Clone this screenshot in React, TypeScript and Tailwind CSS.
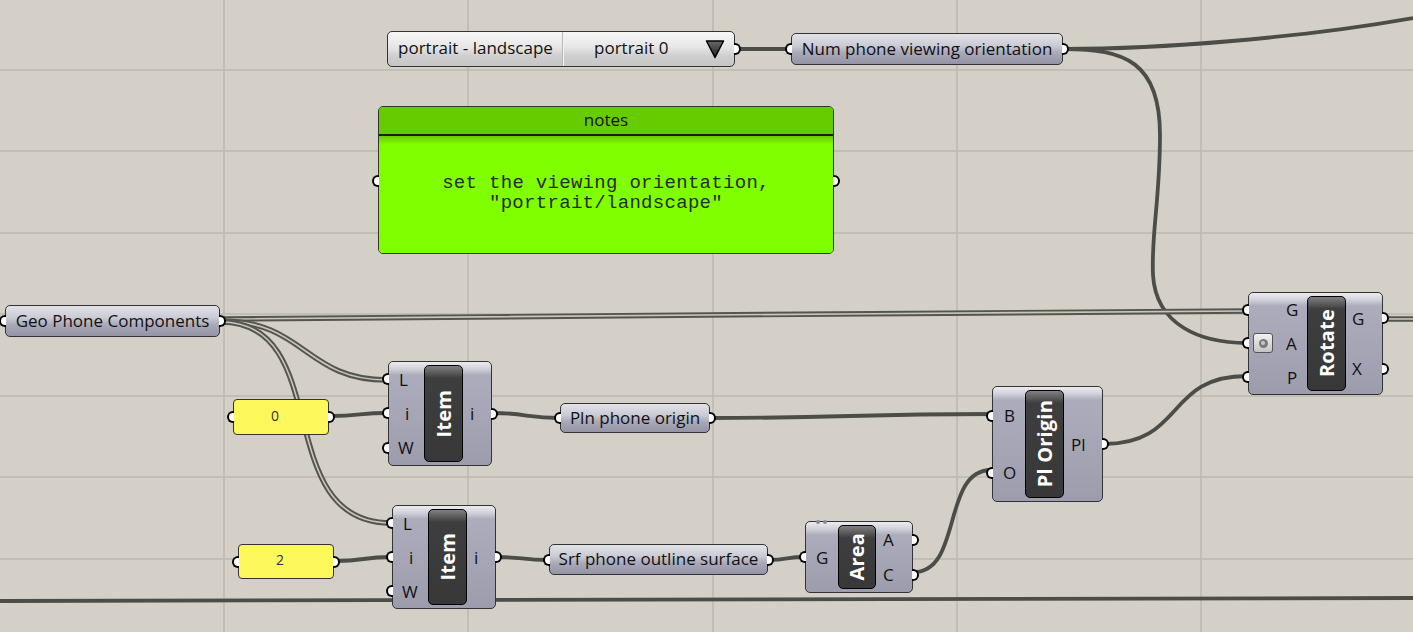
import React from "react";

function Port({ side }: { side: "l" | "r" }) {
  return side === "l" ? (
    <span className="absolute left-[-7px] top-1/2 -translate-y-1/2 w-[7px] h-[12px] rounded-l-full border-[2.5px] border-r-0 border-black bg-white" />
  ) : (
    <span className="absolute right-[-7px] top-1/2 -translate-y-1/2 w-[7px] h-[12px] rounded-r-full border-[2.5px] border-l-0 border-black bg-white" />
  );
}

const paramBg =
  "bg-[linear-gradient(to_bottom,#e2e2e8,#cacad4_40%,#a9a9b9_62%,#9494a6)]";
const compBg =
  "bg-[linear-gradient(to_bottom,#ececf0,#d0d0da_7px,#acacbc_13px,#a4a4b4_60%,#9c9cac)]";
const font = "font-['Open_Sans','Noto_Sans',sans-serif]";

function Param({ cls, label }: { cls: string; label: string }) {
  return (
    <div
      className={
        "absolute rounded-[5px] border border-[#333] flex items-center justify-center text-[17px] text-[#111] " +
        paramBg +
        " " +
        cls
      }
    >
      <Port side="l" />
      <span className="leading-none pb-[2px]">{label}</span>
      <Port side="r" />
    </div>
  );
}

function Yellow({ cls, label }: { cls: string; label: string }) {
  return (
    <div
      className={
        "absolute rounded-[4px] border border-[#333] bg-[#fdf85c] flex justify-center items-center pb-[4px] pr-[12px] text-[14px] text-[#333] " +
        cls
      }
    >
      <Port side="l" />
      {label}
      <Port side="r" />
    </div>
  );
}

function Row({
  label,
  side,
  cls = "",
}: {
  label: string;
  side: "l" | "r";
  cls?: string;
}) {
  return (
    <div className={"relative h-[20px] flex items-center " + cls}>
      <Port side={side} />
      <span className="text-[17px] leading-none text-[#111]">{label}</span>
    </div>
  );
}

function Inner({ name, cls }: { name: string; cls: string }) {
  return (
    <div
      className={
        "my-[3px] rounded-[5px] border-[1.5px] border-black bg-[linear-gradient(to_bottom,#808080,#5a5a5a_7px,#3e3e3e_12px,#383838)] flex items-center justify-center " +
        cls
      }
    >
      <span className="[writing-mode:vertical-rl] rotate-180 text-white font-bold text-[20px] leading-none tracking-[0.2px]">
        {name}
      </span>
    </div>
  );
}

function Grid() {
  const xs = [224, 468, 713, 957, 1201];
  const ys = [70, 151, 233, 314, 396, 477, 559];
  return (
    <g stroke="#bcb8b0" strokeWidth="1.5">
      {xs.map((x) => (
        <line key={"x" + x} x1={x} y1={0} x2={x} y2={632} />
      ))}
      {ys.map((y) => (
        <line key={"y" + y} x1={0} y1={y} x2={1413} y2={y} />
      ))}
    </g>
  );
}

function Wire({ d }: { d: string }) {
  return <path d={d} fill="none" stroke="#4c4c48" strokeWidth="3.8" />;
}
function DWire({ d }: { d: string }) {
  return (
    <g fill="none">
      <path d={d} stroke="#55554f" strokeWidth="5.5" />
      <path d={d} stroke="#c9c5bd" strokeWidth="1.6" />
    </g>
  );
}

export default function App() {
  return (
    <div
      className={
        "relative w-[1413px] h-[632px] overflow-hidden bg-[#d4d0c8] " + font
      }
    >
      <svg
        className="absolute inset-0"
        width="1413"
        height="632"
        viewBox="0 0 1413 632"
      >
        <Grid />
        <Wire d="M0,601 C400,600 900,598 1413,598" />
        <Wire d="M736,49 L790,49" />
        <Wire d="M1064,49 C1160,49 1300,38 1413,18" />
        <Wire d="M1064,49 C1125,49 1160,62 1160,135 C1160,200 1151,235 1153,275 C1156,325 1200,343 1247,343" />
        <DWire d="M221,319 C600,318 900,312 1247,311" />
        <DWire d="M1384,319 L1413,319" />
        <DWire d="M221,321 C305,321 305,380 387,380" />
        <DWire d="M221,322 C335,322 270,523 391,523" />
        <Wire d="M331,416 C360,416 360,413 387,413" />
        <Wire d="M336,561 C365,561 362,557 391,557" />
        <Wire d="M493,413 C525,413 528,418 559,418" />
        <Wire d="M711,418 C850,418 850,414 991,414" />
        <Wire d="M497,557 C522,557 522,560 548,560" />
        <Wire d="M769,560 C787,560 787,557 804,557" />
        <Wire d="M914,572 C962,572 942,470 991,470" />
        <Wire d="M1104,444 C1185,444 1165,376 1247,376" />
      </svg>

      {/* Value list */}
      <div className="absolute left-[387px] top-[31px] w-[348px] h-[36px] rounded-[5px] border border-[#333] bg-[linear-gradient(to_bottom,#f7f7f7,#e6e6e6_45%,#cfcfcf_70%,#c6c6c6)] flex items-center text-[17px] text-[#111]">
        <div className="w-[175px] h-full flex items-center pl-[10px] border-r border-[#b8b8b8]">
          <span className="pb-[2px] whitespace-nowrap">portrait - landscape</span>
        </div>
        <div className="w-[1px] h-full bg-[#f4f4f4]" />
        <div className="flex-1 h-full flex items-center justify-between pl-[30px] pr-[9px]">
          <span className="pb-[2px]">portrait 0</span>
          <svg width="20" height="20" viewBox="0 0 20 20">
            <defs>
              <linearGradient id="tri" x1="0" y1="0" x2="0" y2="1">
                <stop offset="0" stopColor="#6a6a6a" />
                <stop offset="1" stopColor="#1e1e1e" />
              </linearGradient>
            </defs>
            <polygon
              points="1.5,2 18.5,2 10,18.5"
              fill="url(#tri)"
              stroke="#000"
              strokeWidth="1.5"
              strokeLinejoin="round"
            />
          </svg>
        </div>
        <Port side="r" />
      </div>

      <Param
        cls="left-[791px] top-[33px] w-[272px] h-[32px]"
        label="Num phone viewing orientation"
      />

      {/* Notes panel */}
      <div className="absolute left-[378px] top-[106px] w-[456px] h-[148px] rounded-[5px] border border-[#333] bg-[#80ff00] flex flex-col">
        <div className="h-[29px] rounded-t-[4px] bg-[#66cc00] border-b-[2px] border-[#1c1c1c] flex items-center justify-center text-[17px] text-[#111]">
          <span className="pb-[2px]">notes</span>
        </div>
        <div className="relative flex-1 rounded-b-[4px] bg-[linear-gradient(to_bottom,#66cc00,#80ff00_9px,#80ff00)] flex flex-col items-center justify-center pb-[2px] font-['Liberation_Mono',monospace] text-[19px] leading-[19.5px] text-[#2a2a2a]">
          <div className="tracking-[0.3px]">set the viewing orientation,</div>
          <div className="tracking-[0.3px]">"portrait/landscape"</div>
        </div>
        <span className="absolute left-[-7px] top-[68px] w-[7px] h-[12px] rounded-l-full border-[2.5px] border-r-0 border-black bg-white" />
        <span className="absolute right-[-7px] top-[68px] w-[7px] h-[12px] rounded-r-full border-[2.5px] border-l-0 border-black bg-white" />
      </div>

      <Param
        cls="left-[5px] top-[305px] w-[215px] h-[32px]"
        label="Geo Phone Components"
      />
      <Yellow cls="left-[233px] top-[399px] w-[96px] h-[36px]" label="0" />
      <Yellow cls="left-[238px] top-[544px] w-[96px] h-[35px]" label="2" />
      <Param
        cls="left-[560px] top-[403px] w-[150px] h-[30px]"
        label="Pln phone origin"
      />
      <Param
        cls="left-[549px] top-[544px] w-[219px] h-[31px]"
        label="Srf phone outline surface"
      />

      {/* Item 1 */}
      <div
        className={
          "absolute left-[388px] top-[361px] w-[104px] h-[105px] rounded-[5px] border border-[#333] flex " +
          compBg
        }
      >
        <div className="w-[35px] flex flex-col justify-around">
          <Row label="L" side="l" cls="pl-[10px]" />
          <Row label="i" side="l" cls="pl-[16px]" />
          <Row label="W" side="l" cls="pl-[9px]" />
        </div>
        <Inner name="Item" cls="w-[39px]" />
        <div className="flex-1 flex flex-col justify-around">
          <Row label="i" side="r" cls="pl-[7px]" />
        </div>
      </div>

      {/* Item 2 */}
      <div
        className={
          "absolute left-[392px] top-[505px] w-[104px] h-[104px] rounded-[5px] border border-[#333] flex " +
          compBg
        }
      >
        <div className="w-[35px] flex flex-col justify-around">
          <Row label="L" side="l" cls="pl-[10px]" />
          <Row label="i" side="l" cls="pl-[16px]" />
          <Row label="W" side="l" cls="pl-[9px]" />
        </div>
        <Inner name="Item" cls="w-[39px]" />
        <div className="flex-1 flex flex-col justify-around">
          <Row label="i" side="r" cls="pl-[7px]" />
        </div>
      </div>

      {/* Area */}
      <div
        className={
          "absolute left-[805px] top-[521px] w-[108px] h-[72px] rounded-[5px] border border-[#333] flex " +
          compBg
        }
      >
        <span className="absolute left-[10px] top-[-2px] w-[4px] h-[4px] rounded-full bg-[#8a8a96]" />
        <span className="absolute left-[17px] top-[-2px] w-[4px] h-[4px] rounded-full bg-[#8a8a96]" />
        <div className="w-[32px] flex flex-col justify-around">
          <Row label="G" side="l" cls="pl-[10px]" />
        </div>
        <Inner name="Area" cls="w-[38px]" />
        <div className="flex-1 flex flex-col justify-around">
          <Row label="A" side="r" cls="pl-[7px]" />
          <Row label="C" side="r" cls="pl-[7px]" />
        </div>
      </div>

      {/* Pl Origin */}
      <div
        className={
          "absolute left-[992px] top-[386px] w-[111px] h-[116px] rounded-[5px] border border-[#333] flex " +
          compBg
        }
      >
        <div className="w-[32px] flex flex-col justify-around">
          <Row label="B" side="l" cls="pl-[11px]" />
          <Row label="O" side="l" cls="pl-[10px]" />
        </div>
        <Inner name="Pl Origin" cls="w-[39px]" />
        <div className="flex-1 flex flex-col justify-around">
          <Row label="Pl" side="r" cls="pl-[7px]" />
        </div>
      </div>

      {/* Rotate */}
      <div
        className={
          "absolute left-[1248px] top-[292px] w-[135px] h-[103px] rounded-[5px] border border-[#333] flex " +
          compBg
        }
      >
        <div className="w-[58px] flex flex-col justify-around">
          <Row label="G" side="l" cls="pl-[37px]" />
          <div className="relative h-[20px] flex items-center">
            <Port side="l" />
            <div className="ml-[4px] w-[20px] h-[20px] rounded-[3px] border border-[#555] bg-[linear-gradient(to_bottom,#f2f2f2,#c4c4c4)] flex items-center justify-center">
              <div className="w-[9px] h-[9px] rounded-full bg-[#7a7a7a] flex items-center justify-center">
                <div className="w-[4px] h-[4px] rounded-full bg-[#c8c8c8]" />
              </div>
            </div>
            <span className="ml-[13px] text-[17px] leading-none text-[#111]">
              A
            </span>
          </div>
          <Row label="P" side="l" cls="pl-[38px]" />
        </div>
        <Inner name="Rotate" cls="w-[39px]" />
        <div className="flex-1 flex flex-col justify-around">
          <Row label="G" side="r" cls="pl-[6px]" />
          <Row label="X" side="r" cls="pl-[6px]" />
        </div>
      </div>
    </div>
  );
}
